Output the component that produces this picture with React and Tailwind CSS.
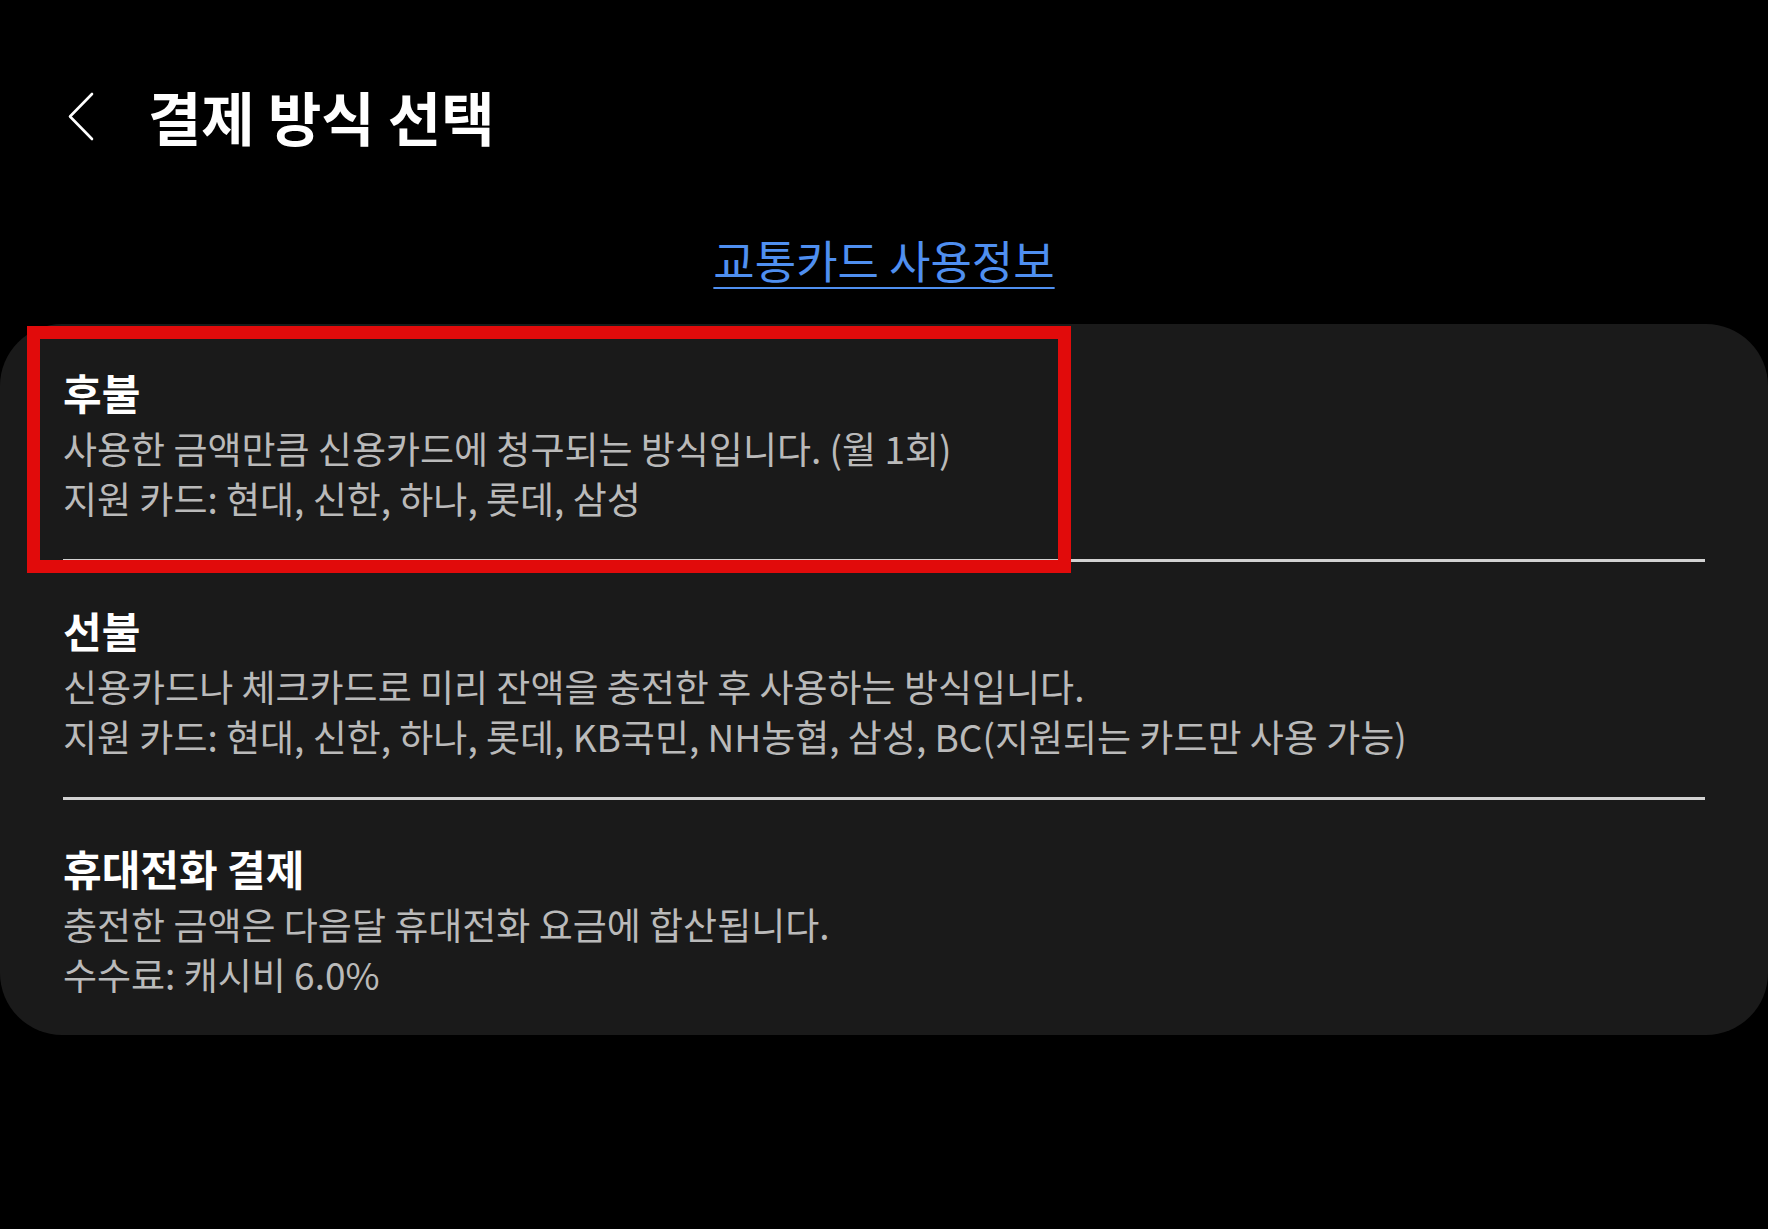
const FONT = { fontFamily: '"Noto Sans CJK KR", "Noto Sans", sans-serif' };

const METHODS = [
  {
    key: "postpaid",
    title: "후불",
    lines: [
      "사용한 금액만큼 신용카드에 청구되는 방식입니다. (월 1회)",
      "지원 카드: 현대, 신한, 하나, 롯데, 삼성",
    ],
  },
  {
    key: "prepaid",
    title: "선불",
    lines: [
      "신용카드나 체크카드로 미리 잔액을 충전한 후 사용하는 방식입니다.",
      "지원 카드: 현대, 신한, 하나, 롯데, KB국민, NH농협, 삼성, BC(지원되는 카드만 사용 가능)",
    ],
  },
  {
    key: "phone",
    title: "휴대전화 결제",
    lines: ["충전한 금액은 다음달 휴대전화 요금에 합산됩니다.", "수수료: 캐시비 6.0%"],
  },
];

function BackIcon() {
  return (
    <svg width="27" height="49" viewBox="0 0 27 49" fill="none">
      <polyline
        points="25,2 3,24.5 25,47"
        stroke="#ffffff"
        strokeWidth="2.6"
        strokeLinecap="round"
        strokeLinejoin="round"
      />
    </svg>
  );
}

function MethodItem({ title, lines }) {
  return (
    <div className="px-[63px] pt-[43px] pb-[36px]">
      <div className="text-[42px] font-bold leading-[50px] text-white">{title}</div>
      <div className="mt-[6px]">
        {lines.map((line) => (
          <div key={line} className="whitespace-nowrap text-[37px] leading-[50px] text-[#bababa]">
            {line}
          </div>
        ))}
      </div>
    </div>
  );
}

export default function App() {
  return (
    <div className="relative h-[1229px] w-full overflow-hidden bg-black" style={FONT}>
      {/* Header */}
      <div className="flex h-[232px] items-center">
        <div className="ml-[67px] flex h-[49px] w-[27px] items-center">
          <BackIcon />
        </div>
        <h1 className="ml-[54px] text-[58px] font-bold leading-none text-white">결제 방식 선택</h1>
      </div>

      {/* Link */}
      <div className="flex h-[56px] items-center justify-center">
        <span className="text-[45px] leading-[56px] text-[#4f8ff0] underline decoration-2 underline-offset-[8px]">
          교통카드 사용정보
        </span>
      </div>

      {/* Card */}
      <div className="mt-[36px] rounded-[62px] bg-[#1a1a1a]">
        {METHODS.map((m, i) => (
          <div key={m.key}>
            <MethodItem title={m.title} lines={m.lines} />
            {i < METHODS.length - 1 && <div className="mx-[63px] h-[3px] bg-[#d2d2d2]" />}
          </div>
        ))}
      </div>

      {/* Highlight annotation */}
      <div className="pointer-events-none absolute left-[27px] top-[326px] h-[247px] w-[1044px] border-[13px] border-[#e10b0b]" />
    </div>
  );
}
